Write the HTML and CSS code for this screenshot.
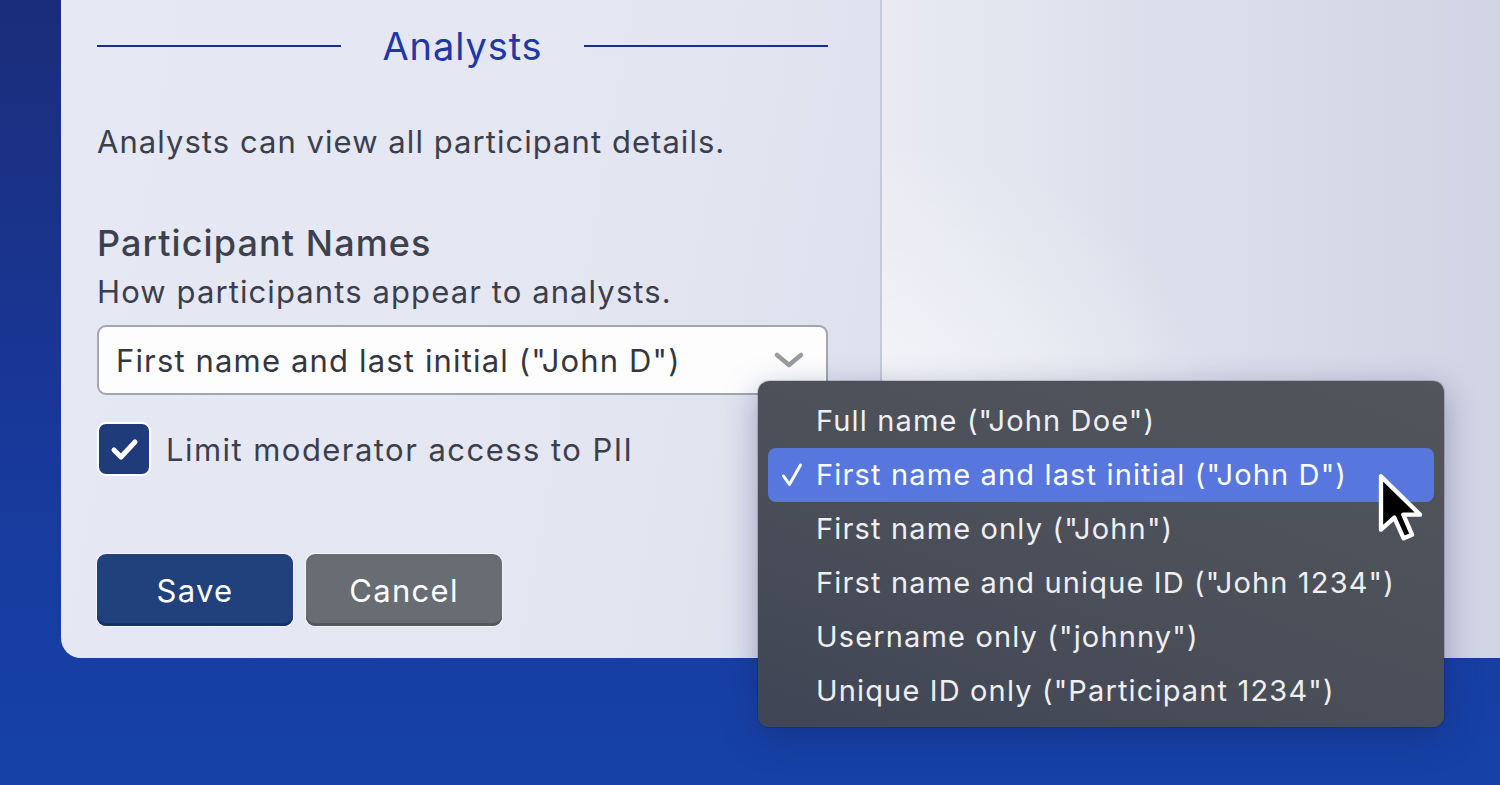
FILE: index.html
```html
<!DOCTYPE html>
<html lang="en">
<head>
<meta charset="utf-8">
<title>Analysts settings</title>
<link rel="stylesheet" href="styles.css">
</head>
<body>
<div class="stage">
  <div class="top">
    <div class="strip"></div>
    <section class="card">
      <div class="heading">
        <span class="rule"></span>
        <h2 class="title">Analysts</h2>
        <span class="rule"></span>
      </div>
      <p class="desc">Analysts can view all participant details.</p>
      <h3 class="label">Participant Names</h3>
      <p class="hint">How participants appear to analysts.</p>
      <div class="select">
        <span class="select-text">First name and last initial ("John D")</span>
        <svg class="chev" width="30" height="16" viewBox="0 0 30 16"><path d="M3 3 L15 13 L27 3" fill="none" stroke="#9a9ca2" stroke-width="4.5" stroke-linecap="round" stroke-linejoin="round"/></svg>
      </div>
      <div class="check-row">
        <span class="checkbox">
          <svg width="34" height="34" viewBox="0 0 34 34"><path d="M7 18 L14 25 L28 10" fill="none" stroke="#ffffff" stroke-width="5" stroke-linecap="round" stroke-linejoin="round"/></svg>
        </span>
        <span class="check-label">Limit moderator access to PII</span>
      </div>
      <div class="buttons">
        <button class="btn save">Save</button>
        <button class="btn cancel">Cancel</button>
      </div>
    </section>
    <div class="side"></div>
  </div>

  <ul class="menu">
    <li class="item">Full name ("John Doe")</li>
    <li class="item selected">
      <svg class="tick" width="22" height="26" viewBox="0 0 22 26"><path d="M2.5 14 L8.5 22.5 L19.5 3" fill="none" stroke="#ffffff" stroke-width="3" stroke-linecap="round" stroke-linejoin="round"/></svg>First name and last initial ("John D")</li>
    <li class="item">First name only ("John")</li>
    <li class="item">First name and unique ID ("John 1234")</li>
    <li class="item">Username only ("johnny")</li>
    <li class="item">Unique ID only ("Participant 1234")</li>
  </ul>

  <svg class="cursor" width="50" height="74" viewBox="-1.5 -1.5 15 22">
    <path d="M0 0 L0 16 L4 12.4 L6.8 18.6 L9.3 17.5 L6.7 11.5 L11.7 11.5 Z" fill="#000" stroke="#fff" stroke-width="1.3" stroke-linejoin="round"/>
  </svg>
</div>
</body>
</html>
```

FILE: styles.css
```css
* { box-sizing: border-box; }

html, body {
  margin: 0;
  padding: 0;
}

body {
  width: 1500px;
  height: 785px;
  overflow: hidden;
  background: linear-gradient(180deg, #1b2d79 0%, #18389a 55%, #1642a8 100%);
  font-family: Inter, "Noto Sans", "Liberation Sans", sans-serif;
}

.stage {
  position: relative;
  width: 1500px;
  height: 785px;
}

.top {
  display: flex;
  height: 658px;
}

.strip {
  width: 61px;
  flex: none;
}

.card {
  width: 821px;
  flex: none;
  padding: 0 52px 32px 36px;
  background: linear-gradient(100deg, #e6e9f4 0%, #e4e7f2 60%, #dee1ed 100%);
  border-right: 2px solid #c6c9d6;
  border-bottom-left-radius: 20px;
  color: #3b3f4b;
}

.side {
  flex: 1;
  background:
    radial-gradient(ellipse 420px 520px at 0% 100%, rgba(255,255,255,0.95) 0%, rgba(255,255,255,0) 100%),
    linear-gradient(90deg, #e9eaf3 0%, #dcdfeb 45%, #d1d4e4 100%);
}

.heading {
  display: flex;
  align-items: center;
  height: 92px;
  gap: 41px;
}

.rule {
  flex: 1;
  height: 2px;
  background: #1c2f8d;
}

.title {
  margin: 0;
  font-size: 38px;
  font-weight: 400;
  color: #2137a3;
  line-height: 44px;
  letter-spacing: 0.9px;
}

.desc {
  margin: 30px 0 0;
  font-size: 31px;
  line-height: 40px;
  letter-spacing: 1.05px;
}

.label {
  margin: 59px 0 0;
  font-size: 36px;
  font-weight: 500;
  line-height: 44px;
  color: #3d414d;
  letter-spacing: 1.1px;
}

.hint {
  margin: 7px 0 0;
  font-size: 31px;
  line-height: 40px;
  letter-spacing: 1.1px;
}

.select {
  margin-top: 13px;
  height: 70px;
  display: flex;
  align-items: center;
  justify-content: space-between;
  padding: 0 22px 0 17px;
  background: #fdfdfe;
  border: 2px solid #a3a6ae;
  border-radius: 9px;
}

.select-text {
  font-size: 31px;
  color: #34373f;
  letter-spacing: 1.15px;
}

.chev { display: block; }

.check-row {
  margin-top: 27px;
  display: flex;
  align-items: center;
  gap: 15px;
  height: 54px;
}

.checkbox {
  width: 54px;
  height: 54px;
  border-radius: 9px;
  background: #1f3b79;
  border: 2px solid #ffffff;
  display: flex;
  align-items: center;
  justify-content: center;
}

.checkbox svg { display: block; }

.check-label {
  font-size: 31px;
  letter-spacing: 1.45px;
  color: #3b3f4b;
}

.buttons {
  margin-top: 78px;
  display: flex;
  gap: 13px;
}

.btn {
  width: 196px;
  height: 72px;
  border: none;
  border-radius: 9px;
  font-family: inherit;
  font-size: 31px;
  color: #ffffff;
  letter-spacing: 1.3px;
  padding: 0;
}

.save {
  background: #21417c;
  box-shadow: inset 0 -3px 0 #16306a, 0 0 0 1px rgba(255,255,255,0.6);
}

.cancel {
  background: #686c73;
  box-shadow: inset 0 -3px 0 #55585e, 0 0 0 1px rgba(255,255,255,0.6);
}

.menu {
  position: absolute;
  left: 758px;
  top: 381px;
  width: 686px;
  height: 346px;
  margin: 0;
  padding: 13px 10px 7px;
  list-style: none;
  border-radius: 11px;
  background: linear-gradient(20deg, #3f4555 0%, #4b4f59 45%, #52555b 100%);
  box-shadow: 0 10px 34px rgba(20, 30, 90, 0.35), 0 0 0 1px rgba(0,0,0,0.15);
}

.item {
  position: relative;
  height: 54px;
  line-height: 54px;
  padding-left: 48px;
  font-size: 29px;
  color: #efeff1;
  letter-spacing: 1.15px;
  border-radius: 8px;
}

.item.selected {
  background: #5777de;
  color: #ffffff;
}

.tick {
  position: absolute;
  left: 13px;
  top: 14px;
  display: block;
}

.cursor {
  position: absolute;
  left: 1376px;
  top: 471px;
}
```
